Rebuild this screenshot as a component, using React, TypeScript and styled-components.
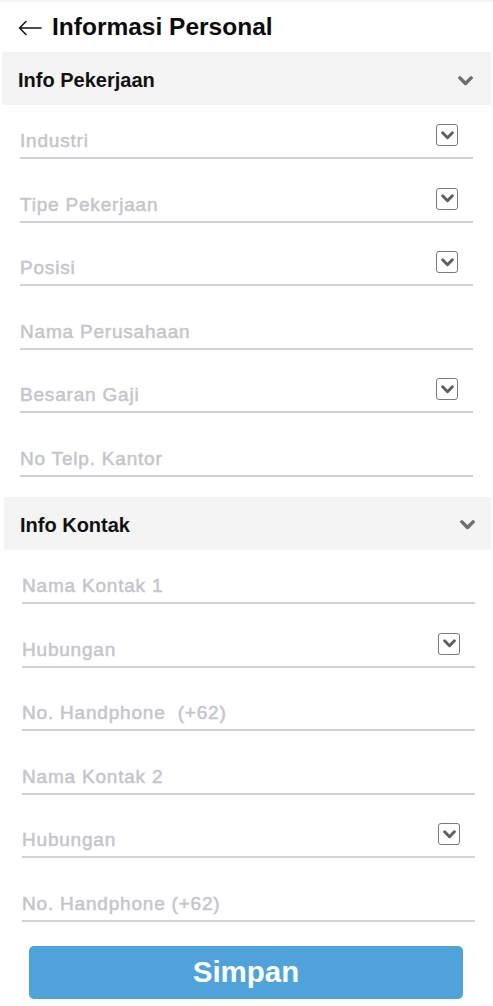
import React from "react";
import styled, { createGlobalStyle } from "styled-components";

const GlobalStyle = createGlobalStyle`
  html, body { margin: 0; padding: 0; background: #ffffff; }
  body { font-family: "Liberation Sans", Arial, sans-serif; }
  * { box-sizing: border-box; }
`;

const Page = styled.div`
  width: 493px;
  min-height: 1006px;
  background: #ffffff;
  display: flex;
  flex-direction: column;
  border-top: 2px solid #f5f5f5;
`;

const TopBar = styled.div`
  height: 50px;
  display: flex;
  align-items: center;
  padding: 0 0 0 18px;
  gap: 10px;
`;

const BackButton = styled.button`
  border: 0;
  background: transparent;
  padding: 0;
  margin-top: 2px;
  width: 24px;
  height: 24px;
  display: flex;
  align-items: center;
  justify-content: center;
  color: #111;
`;

const Title = styled.h1`
  margin: 0;
  font-size: 24.5px;
  font-weight: 700;
  color: #0c0c0c;
  line-height: 1;
`;

const SectionHeader = styled.div<{ $inset: number }>`
  height: 53px;
  margin: 0 2px 0 ${(p) => p.$inset}px;
  background: #f4f4f4;
  display: flex;
  align-items: center;
  justify-content: space-between;
  padding: 4px ${(p) => 20 - p.$inset}px 0 16px;
`;

const SectionTitle = styled.span`
  font-size: 20px;
  font-weight: 700;
  color: #111;
`;

const FieldList = styled.div<{ $inset: number }>`
  display: flex;
  flex-direction: column;
  gap: 9.6px;
  margin: 0 ${(p) => 493 - p.$inset - 453}px 0 ${(p) => p.$inset}px;
`;

const Field = styled.div`
  height: 54px;
  display: flex;
  align-items: flex-end;
  justify-content: space-between;
  padding: 0 15px 6px 0;
  border-bottom: 2px solid #d1d1d6;
`;

const Placeholder = styled.span`
  font-size: 19px;
  line-height: 20px;
  color: #c5c5cc;
  letter-spacing: 0.8px;
  -webkit-text-stroke: 0.5px #c5c5cc;
  white-space: pre;
`;

const SelectBox = styled.span`
  width: 22px;
  height: 22px;
  margin-bottom: 5px;
  border: 1.5px solid #7a7a7a;
  border-radius: 3px;
  display: flex;
  align-items: center;
  justify-content: center;
`;

const SaveButton = styled.button`
  margin: 24px 0 0 29px;
  width: 434px;
  height: 53px;
  border: 0;
  border-radius: 5px;
  background: #4fa3da;
  color: #fbfdff;
  font-family: "Liberation Sans", Arial, sans-serif;
  font-size: 29.5px;
  font-weight: 700;
  display: flex;
  align-items: center;
  justify-content: center;
  padding: 0;
`;

const Spacer = styled.div<{ $h: number }>`
  height: ${(p) => p.$h}px;
`;

const Chevron = ({ w, h, color, sw }: { w: number; h: number; color: string; sw: number }) => (
  <svg width={w} height={h} viewBox="0 0 12 8" fill="none">
    <path d="M1.5 1.5 L6 6 L10.5 1.5" stroke={color} strokeWidth={sw} strokeLinecap="round" strokeLinejoin="round" />
  </svg>
);

const ArrowLeft = () => (
  <svg width="24" height="16" viewBox="0 0 24 16" fill="none">
    <path d="M23 8 H1.5 M8 1.5 L1.5 8 L8 14.5" stroke="#111" strokeWidth="1.5" strokeLinecap="round" strokeLinejoin="round" />
  </svg>
);

type FieldDef = { label: string; select?: boolean };

const jobFields: FieldDef[] = [
  { label: "Industri", select: true },
  { label: "Tipe Pekerjaan", select: true },
  { label: "Posisi", select: true },
  { label: "Nama Perusahaan" },
  { label: "Besaran Gaji", select: true },
  { label: "No Telp. Kantor" },
];

const contactFields: FieldDef[] = [
  { label: "Nama Kontak 1" },
  { label: "Hubungan", select: true },
  { label: "No. Handphone  (+62)" },
  { label: "Nama Kontak 2" },
  { label: "Hubungan", select: true },
  { label: "No. Handphone (+62)" },
];

const Fields = ({ items, inset }: { items: FieldDef[]; inset: number }) => (
  <FieldList $inset={inset}>
    {items.map((f, i) => (
      <Field key={i}>
        <Placeholder>{f.label}</Placeholder>
        {f.select && (
          <SelectBox>
            <Chevron w={13} h={9} color="#5f5f5f" sw={2.7} />
          </SelectBox>
        )}
      </Field>
    ))}
  </FieldList>
);

export default function App() {
  return (
    <Page>
      <GlobalStyle />
      <TopBar>
        <BackButton aria-label="Kembali">
          <ArrowLeft />
        </BackButton>
        <Title>Informasi Personal</Title>
      </TopBar>
      <SectionHeader $inset={2}>
        <SectionTitle>Info Pekerjaan</SectionTitle>
        <Chevron w={15} h={10} color="#6f6f6f" sw={2.8} />
      </SectionHeader>
      <Fields items={jobFields} inset={20} />
      <Spacer $h={20} />
      <SectionHeader $inset={4}>
        <SectionTitle>Info Kontak</SectionTitle>
        <Chevron w={15} h={10} color="#6f6f6f" sw={2.8} />
      </SectionHeader>
      <Fields items={contactFields} inset={22} />
      <SaveButton>Simpan</SaveButton>
    </Page>
  );
}
